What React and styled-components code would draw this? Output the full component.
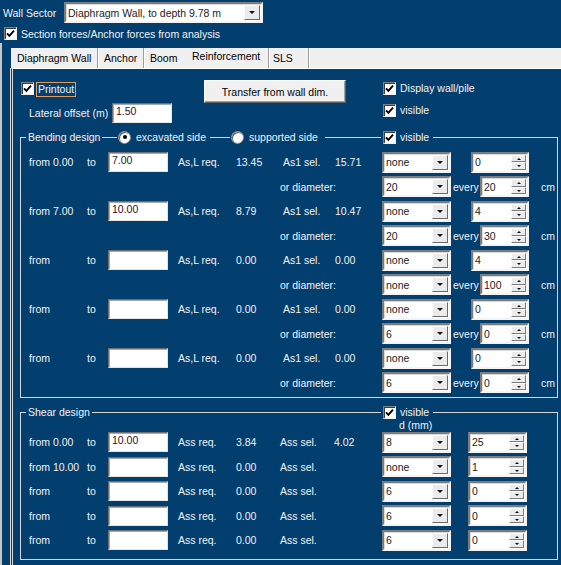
import styled, { createGlobalStyle } from "styled-components";

const BLUE = "#023f6f";
const INK = "#f2f2f2";

const GlobalStyle = createGlobalStyle`
	body {
		margin: 0;
		background: ${BLUE};
	}
`;

const Window = styled.div`
	width: 561px;
	height: 565px;
	overflow: hidden;
	background: ${BLUE};
	color: ${INK};
	font-family: "Liberation Sans", Arial, sans-serif;
	font-size: 10.5px;
	display: flex;
	flex-direction: column;
`;

const TopBar = styled.div`
	display: flex;
	align-items: center;
	height: 21px;
	margin-top: 2px;
	padding-left: 3px;
`;

const BarLabel = styled.span`
	width: 61px;
`;

const CheckRow = styled.label`
	display: flex;
	align-items: center;
	gap: 4px;
	height: 13px;
	margin-top: 4px;
	padding-left: 4px;
`;

// sunken white control, used by combo, spinner and text box
const Sunken = styled.div`
	box-sizing: border-box;
	width: ${(p) => p.$w}px;
	height: ${(p) => p.$h || 21}px;
	background: #fff;
	border: 2px solid;
	border-color: #7c7c7c #f4f4f4 #f4f4f4 #7c7c7c;
	box-shadow: inset 1px 1px 0 #d8d8d8;
	color: #1c1c1c;
	display: flex;
	align-items: center;
	margin-left: ${(p) => p.$ml || 0}px;
`;

const FieldText = styled.span`
	flex: 1;
	padding-left: 2px;
	white-space: nowrap;
	overflow: hidden;
`;

const TextBox = styled.div`
	box-sizing: border-box;
	width: 60px;
	height: 20px;
	background: #fff;
	border: 1px solid;
	border-color: #6e6e6e #e4e4e4 #e4e4e4 #6e6e6e;
	box-shadow: inset 1px 1px 0 #a8a8a8;
	color: #1c1c1c;
	padding: 1px 0 0 3px;
	line-height: 13px;
	${(p) => p.$dark && `color: #3a0a2a;`}
`;

const DropBtn = styled.div`
	box-sizing: border-box;
	width: 16px;
	height: 15px;
	margin-right: 1px;
	background: #ebebeb;
	border: 1px solid;
	border-color: #fff #6a6a6a #6a6a6a #fff;
	display: flex;
	align-items: center;
	justify-content: center;
`;

const Arrow = styled.span`
	width: 0;
	height: 0;
	border-left: ${(p) => p.$s}px solid transparent;
	border-right: ${(p) => p.$s}px solid transparent;
	${(p) => (p.$up ? "border-bottom" : "border-top")}: ${(p) => p.$s}px solid #111;
`;

const SpinBtns = styled.div`
	width: 15px;
	height: 15px;
	margin-right: 1px;
	display: flex;
	flex-direction: column;
`;

const SpinHalf = styled.div`
	flex: 1;
	background: #ececec;
	border: 1px solid;
	border-color: #fff #7a7a7a #7a7a7a #fff;
	display: flex;
	align-items: center;
	justify-content: center;
`;

const Box = styled.span`
	box-sizing: border-box;
	width: 13px;
	height: 13px;
	flex: none;
	background: #fff;
	border: 1px solid;
	border-color: #808080 #f0f0f0 #f0f0f0 #808080;
	box-shadow: inset 1px 1px 0 #3c3c3c;
	display: flex;
	align-items: center;
	justify-content: center;
`;

const RadioDot = styled.span`
	box-sizing: border-box;
	width: 13px;
	height: 13px;
	flex: none;
	border-radius: 50%;
	background: #fff;
	border: 1px solid #8c8c8c;
	box-shadow: inset 1px 1px 0 #555;
	display: flex;
	align-items: center;
	justify-content: center;
	&::after {
		content: "";
		width: 4px;
		height: 4px;
		border-radius: 50%;
		background: ${(p) => (p.$on ? "#000" : "transparent")};
	}
`;

const Frame = styled.div`
	flex: 1;
	display: flex;
	flex-direction: column;
	margin-top: 3px;
	padding: 5px 0 0 8px;
	border-left: 2px solid #c6c6c6;
`;

const TabStrip = styled.div`
	display: flex;
	height: 20px;
	margin-left: 1px;
	background: #f0f0f0;
	color: #000;
`;

const Tab = styled.div`
	box-sizing: border-box;
	width: ${(p) => p.$w}px;
	padding-left: ${(p) => p.$pl}px;
	line-height: ${(p) => (p.$active ? 17 : 21)}px;
	white-space: nowrap;
	border-right: ${(p) => (p.$flat ? "none" : "1px solid #9c9c9c")};
	box-shadow: ${(p) => (p.$flat ? "none" : "1px 0 0 #fff")};
`;

const Panel = styled.div`
	flex: 1;
	background: ${BLUE};
	border-top: 1px solid #fff;
	border-left: 3px double #dedede;
`;

const TopArea = styled.div`
	display: grid;
	grid-template-columns: 191px 179px 1fr;
	grid-template-rows: 23px 20px;
	padding-top: 11px;
`;

const Cell = styled.div`
	display: flex;
	align-items: ${(p) => p.$align || "center"};
	gap: ${(p) => p.$gap || 0}px;
	padding-left: ${(p) => p.$pl || 0}px;
	padding-top: ${(p) => p.$pt || 0}px;
`;

const FocusLabel = styled.span`
	border: 1px solid #e39c5c;
	padding: 0 1px;
	line-height: 13px;
`;

const Button = styled.div`
	box-sizing: border-box;
	width: 142px;
	height: 23px;
	background: #f0f0f0;
	color: #000;
	border: 1px solid;
	border-color: #fff #5e5e5e #5e5e5e #fff;
	box-shadow: inset -1px -1px 0 #a0a0a0;
	display: flex;
	align-items: center;
	justify-content: center;
`;

const Group = styled.div`
	box-sizing: border-box;
	width: 538px;
	margin: 14px 0 0 7px;
	border: 1px solid #d6d6d6;
	padding-bottom: ${(p) => p.$pb}px;
`;

const GroupHead = styled.div`
	display: flex;
	align-items: center;
	height: 16px;
	margin-top: -9px;
`;

const HeadItem = styled.div`
	box-sizing: border-box;
	display: flex;
	align-items: center;
	gap: ${(p) => p.$gap || 0}px;
	height: 16px;
	width: ${(p) => p.$w}px;
	margin-left: ${(p) => p.$ml}px;
	padding-left: ${(p) => p.$pl || 2}px;
	background: ${BLUE};
	white-space: nowrap;
`;

const Rows = styled.div`
	padding-top: ${(p) => p.$pt || 0}px;
`;

const Row = styled.div`
	display: grid;
	grid-template-columns: ${(p) => p.$cols};
	align-items: center;
	height: 24.5px;
	padding-left: ${(p) => p.$pl || 0}px;
	white-space: nowrap;
`;

const FromText = styled.span`
	padding-left: 8px;
`;

const EveryText = styled.span`
	padding-left: 2px;
`;

const UnitText = styled.span`
	padding-left: 12px;
`;

const DRow = styled.div`
	height: 10px;
	line-height: 10px;
	padding-left: 378px;
`;

const Check = () => (
	<Box>
		<svg width="9" height="9" viewBox="0 0 9 9">
			<path d="M1 4.3 L3.4 6.8 L8 1.6" fill="none" stroke="#000" strokeWidth="1.9" />
		</svg>
	</Box>
);

const Combo = ({ w, ml, children }) => (
	<Sunken $w={w} $ml={ml}>
		<FieldText>{children}</FieldText>
		<DropBtn>
			<Arrow $s={3.5} />
		</DropBtn>
	</Sunken>
);

const Spinner = ({ w, ml, children }) => (
	<Sunken $w={w} $ml={ml}>
		<FieldText>{children}</FieldText>
		<SpinBtns>
			<SpinHalf>
				<Arrow $s={2} $up />
			</SpinHalf>
			<SpinHalf>
				<Arrow $s={2} />
			</SpinHalf>
		</SpinBtns>
	</Sunken>
);

const bending = [
	{ from: "from 0.00", to: "7.00", req: "13.45", sel: "15.71", bar: "none", n: "0", dia: "20", every: "20" },
	{ from: "from 7.00", to: "10.00", req: "8.79", sel: "10.47", bar: "none", n: "4", dia: "20", every: "30" },
	{ from: "from", to: "", req: "0.00", sel: "0.00", bar: "none", n: "4", dia: "none", every: "100" },
	{ from: "from", to: "", req: "0.00", sel: "0.00", bar: "none", n: "0", dia: "6", every: "0" },
	{ from: "from", to: "", req: "0.00", sel: "0.00", bar: "none", n: "0", dia: "6", every: "0" },
];

const shear = [
	{ from: "from 0.00", to: "10.00", req: "3.84", sel: "4.02", d: "8", n: "25" },
	{ from: "from 10.00", to: "", req: "0.00", sel: "", d: "none", n: "1" },
	{ from: "from", to: "", req: "0.00", sel: "", d: "6", n: "0" },
	{ from: "from", to: "", req: "0.00", sel: "", d: "6", n: "0" },
	{ from: "from", to: "", req: "0.00", sel: "", d: "6", n: "0" },
];

const BEND_COLS = "66px 21px 70px 58px 47px 52px 47px 69px 1fr";
const DIAM_COLS = "102px 69px 29px 49px 1fr";
const SHEAR_COLS = "66px 21px 70px 58px 44px 54px 48px 69px 1fr";

const App = () => {
	return (
		<Window>
			<GlobalStyle />
			<TopBar>
				<BarLabel>Wall Sector</BarLabel>
				<Combo w={199}>Diaphragm Wall, to depth 9.78 m</Combo>
			</TopBar>
			<CheckRow>
				<Check />
				Section forces/Anchor forces from analysis
			</CheckRow>
			<Frame>
				<TabStrip>
					<Tab $w={87} $pl={6}>Diaphragm Wall</Tab>
					<Tab $w={46} $pl={6}>Anchor</Tab>
					<Tab $w={39} $pl={6} $flat>Boom</Tab>
					<Tab $w={86} $pl={9} $active>Reinforcement</Tab>
					<Tab $w={40} $pl={4}>SLS</Tab>
				</TabStrip>
				<Panel>
					<TopArea>
						<Cell $align="flex-start" $pl={8} $pt={2} $gap={2}>
							<Check />
							<FocusLabel>Printout</FocusLabel>
						</Cell>
						<Cell $align="flex-start">
							<Button>Transfer from wall dim.</Button>
						</Cell>
						<Cell $align="flex-start" $pt={2} $gap={4}>
							<Check />
							Display wall/pile
						</Cell>
						<Cell $pl={16}>
							<span style={{ width: 83 }}>Lateral offset (m)</span>
							<TextBox $dark>1.50</TextBox>
						</Cell>
						<div />
						<Cell $align="flex-start" $pt={1} $gap={4}>
							<Check />
							visible
						</Cell>
					</TopArea>

					<Group $pb={2}>
						<GroupHead>
							<HeadItem $w={76} $ml={5}>Bending design</HeadItem>
							<HeadItem $w={93} $ml={15} $pl={1} $gap={5}>
								<RadioDot $on />
								excavated side
							</HeadItem>
							<HeadItem $w={95} $ml={20} $pl={1} $gap={5}>
								<RadioDot />
								supported side
							</HeadItem>
							<HeadItem $w={52} $ml={56} $gap={4}>
								<Check />
								visible
							</HeadItem>
						</GroupHead>
						<Rows $pt={5}>
							{bending.map((r, i) => (
								<div key={i}>
									<Row $cols={BEND_COLS}>
										<FromText>{r.from}</FromText>
										<span>to</span>
										<TextBox $dark={i === 1}>{r.to}</TextBox>
										<span>As,L req.</span>
										<span>{r.req}</span>
										<span>As1 sel.</span>
										<span>{r.sel}</span>
										<Combo w={69}>{r.bar}</Combo>
										<Spinner w={58} ml={20}>{r.n}</Spinner>
									</Row>
									<Row $cols={DIAM_COLS} $pl={259}>
										<span>or diameter:</span>
										<Combo w={69}>{r.dia}</Combo>
										<EveryText>every</EveryText>
										<Spinner w={49}>{r.every}</Spinner>
										<UnitText>cm</UnitText>
									</Row>
								</div>
							))}
						</Rows>
					</Group>

					<Group $pb={6}>
						<GroupHead>
							<HeadItem $w={66} $ml={5}>Shear design</HeadItem>
							<HeadItem $w={52} $ml={289} $gap={4}>
								<Check />
								visible
							</HeadItem>
						</GroupHead>
						<DRow>d (mm)</DRow>
						<Rows>
							{shear.map((r, i) => (
								<Row key={i} $cols={SHEAR_COLS}>
									<FromText>{r.from}</FromText>
									<span>to</span>
									<TextBox $dark={i === 0}>{r.to}</TextBox>
									<span>Ass req.</span>
									<span>{r.req}</span>
									<span>Ass sel.</span>
									<span>{r.sel}</span>
									<Combo w={69}>{r.d}</Combo>
									<Spinner w={59} ml={17}>{r.n}</Spinner>
								</Row>
							))}
						</Rows>
					</Group>
				</Panel>
			</Frame>
		</Window>
	);
};

export default App;
